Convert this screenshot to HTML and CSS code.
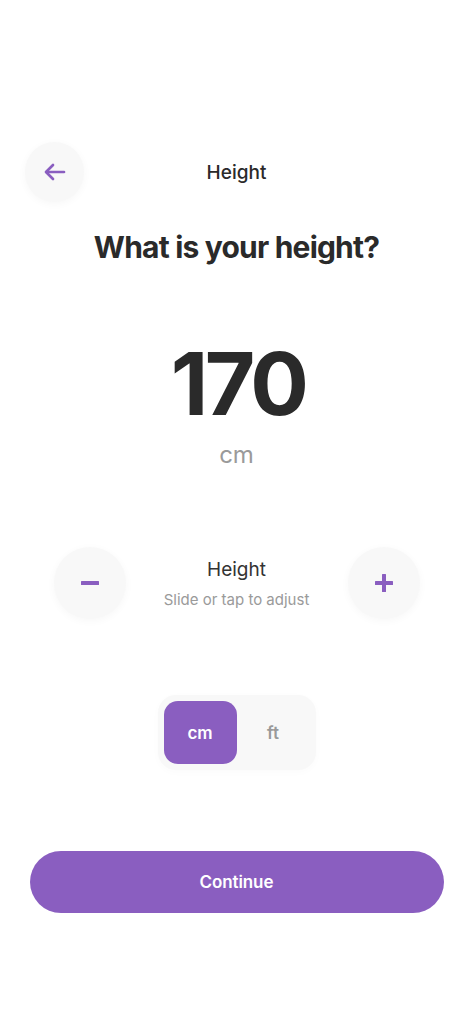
FILE: index.html
```html
<!DOCTYPE html>
<html lang="en">
<head>
<meta charset="utf-8">
<title>Height</title>
<link rel="stylesheet" href="styles.css">
</head>
<body>
<main class="screen">
  <header class="topbar">
    <button class="circle-btn back" aria-label="Back">
      <svg width="24" height="24" viewBox="0 0 24 24" fill="none" stroke="#8a5ec0" stroke-width="2.7" stroke-linecap="round" stroke-linejoin="round"><path d="M21 12H3.5"/><path d="M10 5L3 12L10 19"/></svg>
    </button>
    <div class="topbar-title">Height</div>
    <div class="spacer"></div>
  </header>

  <h1 class="question">What is your height?</h1>

  <div class="value">170</div>
  <div class="unit">cm</div>

  <section class="adjust">
    <button class="circle-btn big" aria-label="Decrease">
      <svg width="20" height="20" viewBox="0 0 20 20"><rect x="1" y="8" width="18" height="4" rx="0.5" fill="#8a5ec0"/></svg>
    </button>
    <div class="adjust-text">
      <div class="adjust-title">Height</div>
      <div class="adjust-hint">Slide or tap to adjust</div>
    </div>
    <button class="circle-btn big" aria-label="Increase">
      <svg width="20" height="20" viewBox="0 0 20 20"><rect x="1" y="8" width="18" height="4" rx="0.5" fill="#8a5ec0"/><rect x="8" y="1" width="4" height="18" rx="0.5" fill="#8a5ec0"/></svg>
    </button>
  </section>

  <div class="toggle">
    <button class="seg active">cm</button>
    <button class="seg">ft</button>
  </div>

  <button class="continue">Continue</button>
</main>
</body>
</html>
```
FILE: styles.css
```css
* { box-sizing: border-box; }
html, body { margin: 0; padding: 0; background: #ffffff; }
body { font-family: Inter, "Noto Sans", "Liberation Sans", sans-serif; color: #2a2a2a; }
button { font-family: inherit; border: none; padding: 0; cursor: pointer; }

.screen {
  width: 473px;
  min-height: 1024px;
  display: flex;
  flex-direction: column;
  align-items: center;
  padding-top: 142px;
}

.topbar {
  width: 100%;
  display: grid;
  grid-template-columns: 60px 1fr 60px;
  align-items: center;
  padding: 0 25px 0 25px;
}
.circle-btn {
  display: flex;
  align-items: center;
  justify-content: center;
  border-radius: 50%;
  background: #f8f8f8;
  box-shadow: 0 2px 8px rgba(0,0,0,0.035);
}
.back { width: 59px; height: 60px; }
.topbar-title {
  text-align: center;
  font-size: 19px;
  font-weight: 500;
  color: #2a2a2a;
}

.question {
  margin: 27px 0 0 0;
  font-size: 30px;
  line-height: 36px;
  font-weight: 700;
  color: #2a2a2a;
  letter-spacing: -0.8px;
}

.value {
  margin-top: 75px;
  padding-left: 3px;
  font-size: 87px;
  line-height: 87px;
  font-weight: 700;
  color: #2a2a2a;
  letter-spacing: -3.7px;
}
.unit {
  margin-top: 16px;
  font-size: 24px;
  line-height: 24px;
  color: #9a9a9a;
  font-weight: 400;
}

.adjust {
  margin-top: 80px;
  width: 366px;
  display: flex;
  align-items: center;
  justify-content: space-between;
}
.big { width: 72px; height: 72px; }
.adjust-text { text-align: center; padding-top: 2px; }
.adjust-title { font-size: 19px; line-height: 24px; color: #333; }
.adjust-hint { margin-top: 8px; font-size: 15px; line-height: 20px; color: #9a9a9a; }

.toggle {
  margin-top: 76px;
  display: flex;
  padding: 6px;
  border-radius: 18px;
  background: #f8f8f8;
  box-shadow: 0 2px 8px rgba(0,0,0,0.02);
}
.seg {
  width: 73px;
  height: 63px;
  border-radius: 14px;
  background: transparent;
  font-size: 17px;
  font-weight: 600;
  color: #9a9a9a;
}
.seg.active { background: #8a5ec0; color: #ffffff; }

.continue {
  margin-top: 81px;
  width: 414px;
  height: 62px;
  border-radius: 31px;
  background: #8a5ec0;
  color: #ffffff;
  font-size: 17px;
  font-weight: 600;
  letter-spacing: -0.1px;
}
```
